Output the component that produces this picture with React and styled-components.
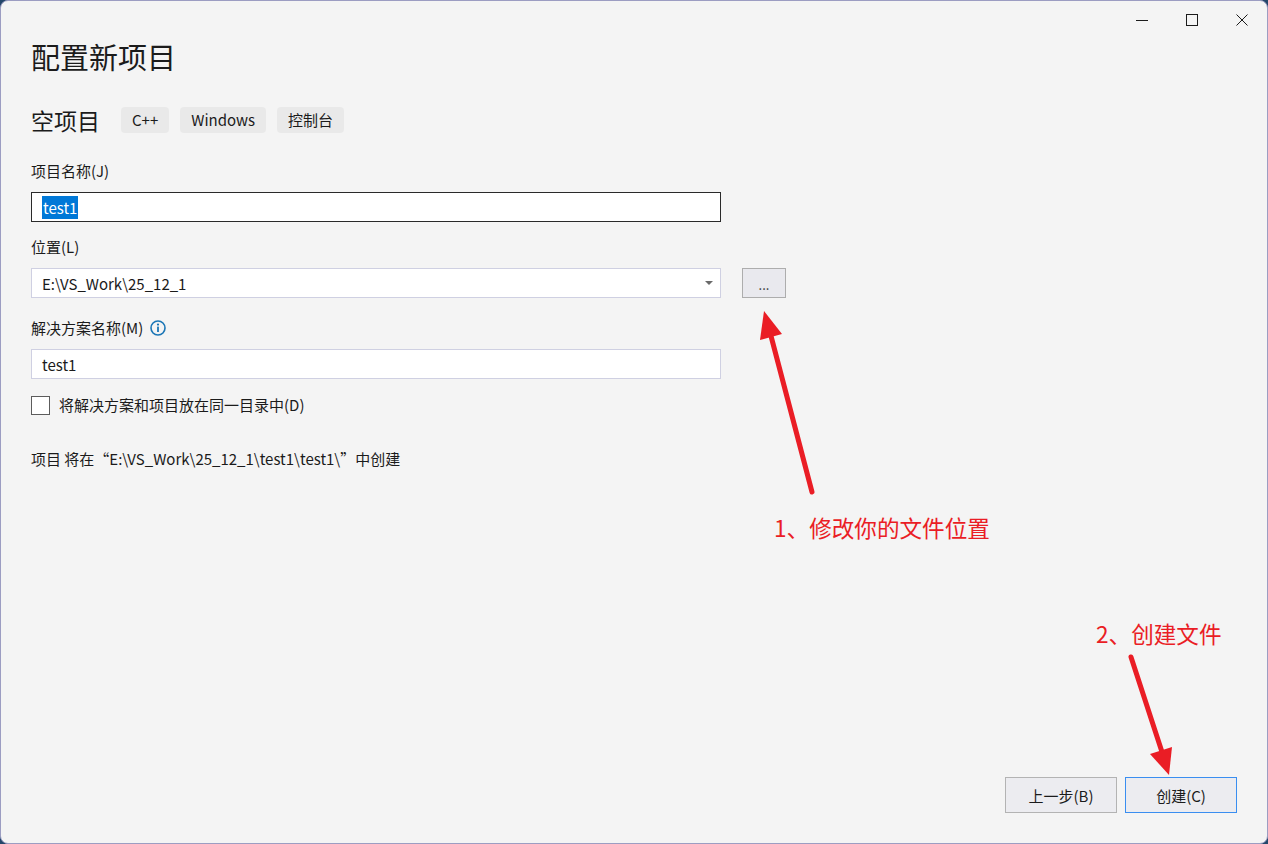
import React from 'react'
import styled, { createGlobalStyle } from 'styled-components'

const GlobalStyle = createGlobalStyle`
  html, body {
    margin: 0;
    padding: 0;
    background: #24476a;
  }
`

const Window = styled.div`
  position: relative;
  display: flex;
  flex-direction: column;
  width: 1268px;
  height: 844px;
  box-sizing: border-box;
  border: 1px solid #9c9dc2;
  border-radius: 8px;
  background: #f4f4f4;
  color: #1b1b1b;
  font-family: "Noto Sans CJK SC", "Noto Sans", sans-serif;
  overflow: hidden;
`

const TitleBar = styled.div`
  display: flex;
  justify-content: flex-end;
  height: 37px;
`

const WinButton = styled.div`
  display: flex;
  align-items: center;
  justify-content: center;
  width: 50px;
  height: 37px;
`

const Body = styled.div`
  display: flex;
  flex: 1;
  flex-direction: column;
  padding: 0 30px 30px 30px;
`

const Title = styled.h1`
  margin: 0;
  font-size: 29px;
  font-weight: 400;
  line-height: 37px;
`

const HeaderRow = styled.div`
  display: flex;
  align-items: center;
  gap: 11px;
  height: 26px;
  margin-top: 32px;
`

const Heading = styled.h2`
  margin: 0 10px 0 0;
  font-size: 23px;
  font-weight: 400;
  line-height: 26px;
`

const Chip = styled.span`
  height: 26px;
  padding: 0 11px;
  border-radius: 4px;
  background: #e9e9e9;
  font-size: 15px;
  line-height: 26px;
`

const Field = styled.div`
  margin-top: ${({ $gap }) => $gap}px;
`

const Label = styled.div`
  display: flex;
  align-items: center;
  gap: 7px;
  height: 20px;
  margin-bottom: 11px;
  font-size: 15px;
  line-height: 20px;
`

const TextBox = styled.div`
  display: flex;
  align-items: center;
  width: 690px;
  height: 30px;
  box-sizing: border-box;
  padding: 0 7px 0 10px;
  border: 1px solid ${({ $focused }) => ($focused ? '#2a2a2a' : '#cfd0e2')};
  background: #fff;
  font-size: 15px;
`

const Value = styled.span`
  flex: 1;
`

const Selected = styled.span`
  padding: 1px 1px;
  background: #0078d7;
  color: #fff;
`

const Caret = styled.span`
  width: 0;
  height: 0;
  border-left: 4px solid transparent;
  border-right: 4px solid transparent;
  border-top: 4px solid #6a6a6a;
`

const SelectRow = styled.div`
  display: flex;
  gap: 21px;
`

const BrowseButton = styled.button`
  width: 44px;
  height: 30px;
  border: 1px solid #adadad;
  background: #e9e9ee;
  color: #333;
  font-family: inherit;
  font-size: 13px;
  line-height: 1;
  padding: 2px 0 0;
`

const CheckRow = styled.label`
  display: flex;
  align-items: center;
  gap: 9px;
  margin-top: 16px;
  font-size: 15px;
  line-height: 20px;
`

const CheckBox = styled.span`
  width: 19px;
  height: 19px;
  box-sizing: border-box;
  border: 1px solid #5c5c5c;
  background: #fff;
`

const PathNote = styled.div`
  margin-top: 34px;
  font-size: 15px;
  line-height: 20px;
`

const Footer = styled.div`
  display: flex;
  justify-content: flex-end;
  gap: 8px;
  margin-top: auto;
`

const ActionButton = styled.button`
  width: 112px;
  height: 36px;
  border: 1px solid ${({ $primary }) => ($primary ? '#3a8ef0' : '#b3b3b3')};
  background: #ececf0;
  color: #1b1b1b;
  font-family: inherit;
  font-size: 15px;
`

const Note = styled.div`
  position: absolute;
  left: ${({ $x }) => $x}px;
  top: ${({ $y }) => $y}px;
  color: #ea1d25;
  font-size: 22.6px;
  line-height: 30px;
  white-space: nowrap;
`

const Overlay = styled.svg`
  position: absolute;
  top: -1px;
  left: -1px;
  pointer-events: none;
`

const InfoIcon = () => (
  <svg width="16" height="16" viewBox="0 0 16 16">
    <circle cx="8" cy="8" r="7" fill="none" stroke="#1b76b6" strokeWidth="1.6" />
    <circle cx="8" cy="4.6" r="1.1" fill="#1b76b6" />
    <rect x="7.1" y="6.6" width="1.8" height="5.4" fill="#1b76b6" />
  </svg>
)

const Arrow = ({ tail, tip, base, left, right }) => (
  <g fill="#ea1d25" stroke="#ea1d25">
    <line x1={tail[0]} y1={tail[1]} x2={base[0]} y2={base[1]} strokeWidth="5" strokeLinecap="round" />
    <polygon points={`${tip.join(',')} ${left.join(',')} ${right.join(',')}`} stroke="none" />
  </g>
)

export default function App () {
  return (
    <>
      <GlobalStyle />
      <Window>
        <TitleBar>
          <WinButton>
            <svg width="14" height="14" viewBox="0 0 14 14"><path d="M1 7.5h12" stroke="#1b1b1b" strokeWidth="1" /></svg>
          </WinButton>
          <WinButton>
            <svg width="14" height="14" viewBox="0 0 14 14"><rect x="1.5" y="1.5" width="11" height="11" fill="none" stroke="#1b1b1b" strokeWidth="1" /></svg>
          </WinButton>
          <WinButton>
            <svg width="14" height="14" viewBox="0 0 14 14"><path d="M1.5 1.5l11 11M12.5 1.5l-11 11" stroke="#1b1b1b" strokeWidth="1" /></svg>
          </WinButton>
        </TitleBar>
        <Body>
          <Title>配置新项目</Title>
          <HeaderRow>
            <Heading>空项目</Heading>
            <Chip>C++</Chip>
            <Chip>Windows</Chip>
            <Chip>控制台</Chip>
          </HeaderRow>

          <Field $gap={28}>
            <Label>项目名称(J)</Label>
            <TextBox $focused>
              <Value><Selected>test1</Selected></Value>
            </TextBox>
          </Field>

          <Field $gap={15}>
            <Label>位置(L)</Label>
            <SelectRow>
              <TextBox>
                <Value>E:\VS_Work\25_12_1</Value>
                <Caret />
              </TextBox>
              <BrowseButton>...</BrowseButton>
            </SelectRow>
          </Field>

          <Field $gap={20}>
            <Label>解决方案名称(M) <InfoIcon /></Label>
            <TextBox>
              <Value>test1</Value>
            </TextBox>
          </Field>

          <CheckRow>
            <CheckBox />
            将解决方案和项目放在同一目录中(D)
          </CheckRow>

          <PathNote>项目 将在“E:\VS_Work\25_12_1\test1\test1\”中创建</PathNote>

          <Footer>
            <ActionButton>上一步(B)</ActionButton>
            <ActionButton $primary>创建(C)</ActionButton>
          </Footer>
        </Body>

        <Note $x={773} $y={512}>1、修改你的文件位置</Note>
        <Note $x={1095} $y={618}>2、创建文件</Note>

        <Overlay width="1268" height="844" viewBox="0 0 1268 844">
          <Arrow tail={[812, 492]} tip={[764, 311]} base={[771, 336]} left={[760, 340]} right={[782, 334]} />
          <Arrow tail={[1131, 657]} tip={[1169, 775]} base={[1162, 752]} left={[1150, 754]} right={[1172, 747]} />
        </Overlay>
      </Window>
    </>
  )
}
